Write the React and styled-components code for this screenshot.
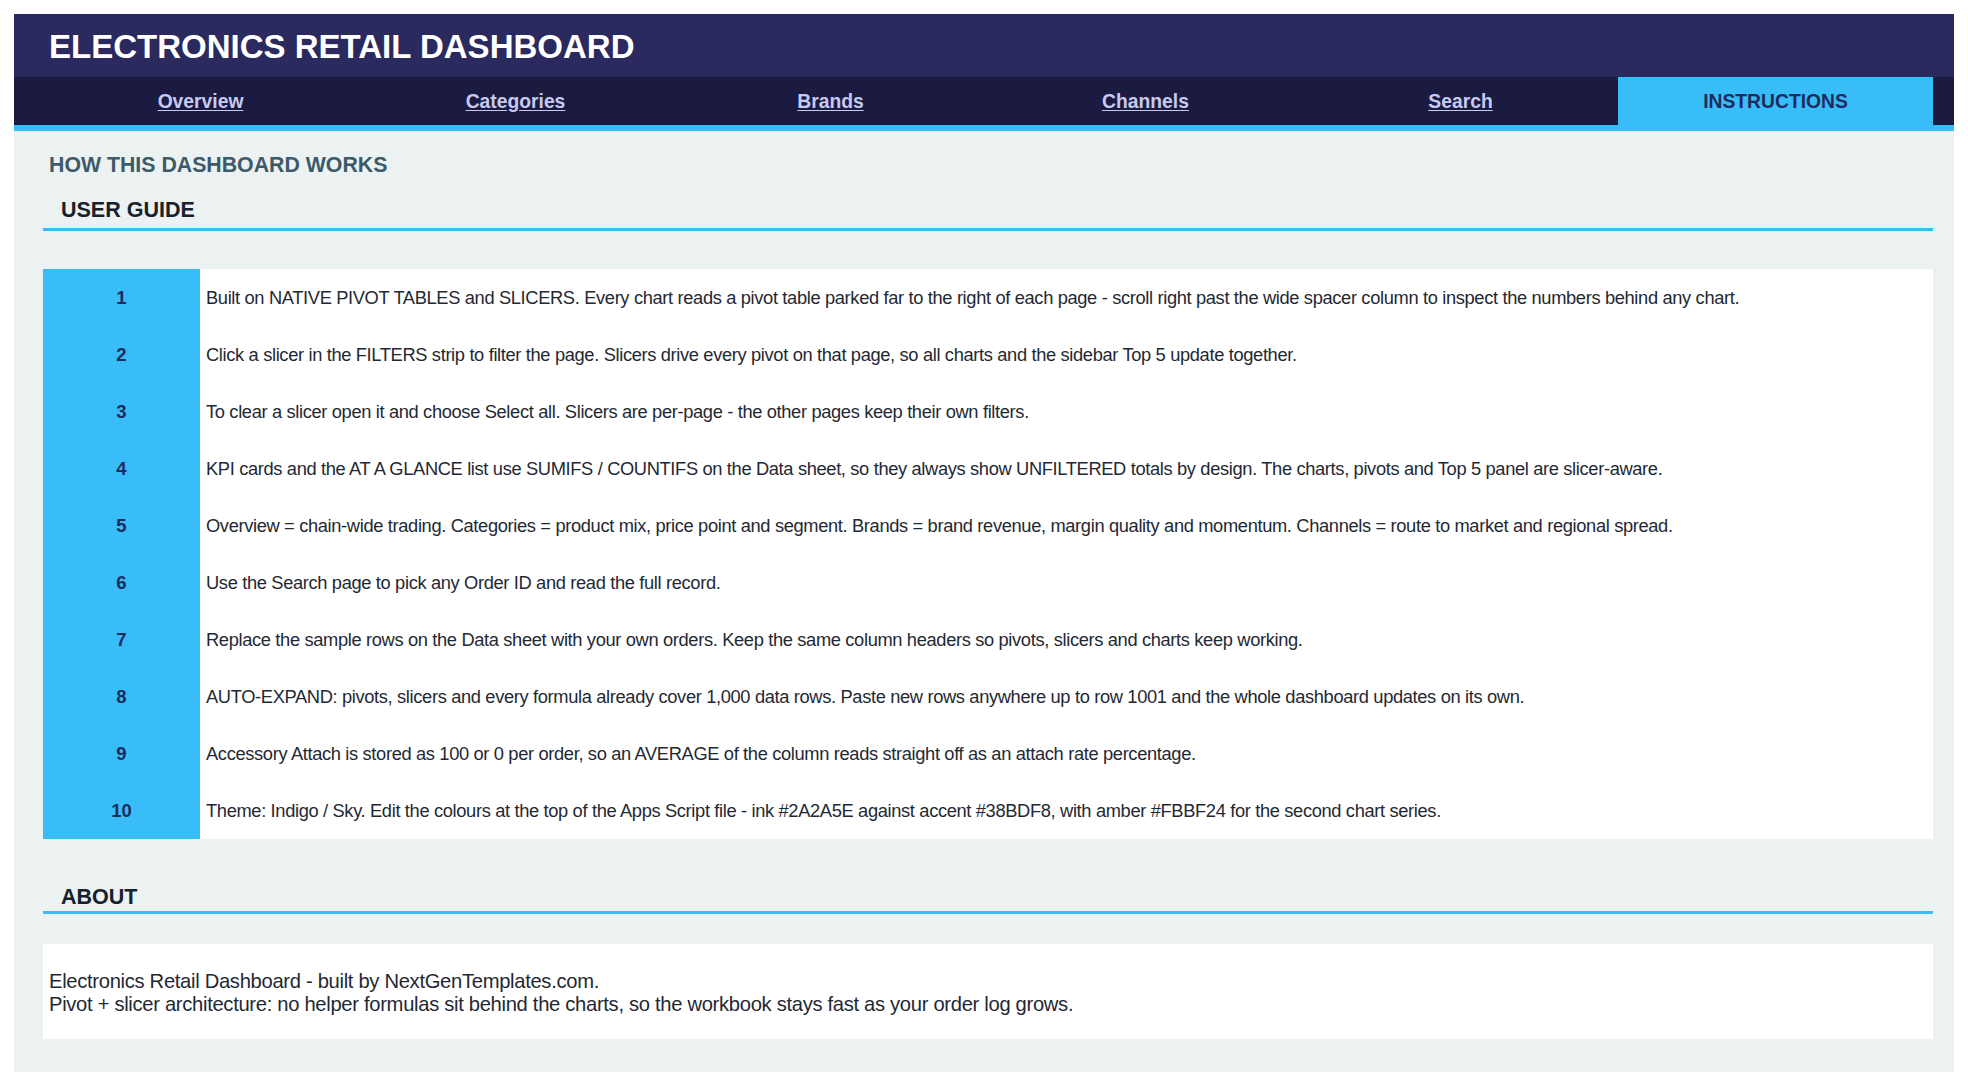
import React from 'react';
import styled, {createGlobalStyle} from 'styled-components';

// Palette
const ink = '#2B2A5E';
const inkDeep = '#1B1A40';
const sky = '#38BDF8';
const navy = '#1E2B5E';

const tabs = ['Overview', 'Categories', 'Brands', 'Channels', 'Search', 'INSTRUCTIONS'];

const steps = [
    'Built on NATIVE PIVOT TABLES and SLICERS. Every chart reads a pivot table parked far to the right of each page - scroll right past the wide spacer column to inspect the numbers behind any chart.',
    'Click a slicer in the FILTERS strip to filter the page. Slicers drive every pivot on that page, so all charts and the sidebar Top 5 update together.',
    'To clear a slicer open it and choose Select all. Slicers are per-page - the other pages keep their own filters.',
    'KPI cards and the AT A GLANCE list use SUMIFS / COUNTIFS on the Data sheet, so they always show UNFILTERED totals by design. The charts, pivots and Top 5 panel are slicer-aware.',
    'Overview = chain-wide trading. Categories = product mix, price point and segment. Brands = brand revenue, margin quality and momentum. Channels = route to market and regional spread.',
    'Use the Search page to pick any Order ID and read the full record.',
    'Replace the sample rows on the Data sheet with your own orders. Keep the same column headers so pivots, slicers and charts keep working.',
    'AUTO-EXPAND: pivots, slicers and every formula already cover 1,000 data rows. Paste new rows anywhere up to row 1001 and the whole dashboard updates on its own.',
    'Accessory Attach is stored as 100 or 0 per order, so an AVERAGE of the column reads straight off as an attach rate percentage.',
    'Theme: Indigo / Sky. Edit the colours at the top of the Apps Script file - ink #2A2A5E against accent #38BDF8, with amber #FBBF24 for the second chart series.',
];

const GlobalStyle = createGlobalStyle`
  body {
    margin: 14px;
    background: #ffffff;
    font-family: "Liberation Sans", Arial, sans-serif;
  }
`;

export default function App() {
    return (
        <>
            <GlobalStyle/>
            <Frame>
                <Header>
                    <Title>ELECTRONICS RETAIL DASHBOARD</Title>
                </Header>
                <Nav>
                    {tabs.map(t => (
                        <NavTab key={t} $active={t === 'INSTRUCTIONS'}>
                            <span>{t}</span>
                        </NavTab>
                    ))}
                </Nav>
                <Content>
                    <Kicker>HOW THIS DASHBOARD WORKS</Kicker>
                    <SectionHeading>USER GUIDE</SectionHeading>
                    <Guide>
                        {steps.map((s, i) => (
                            <GuideRow key={i}>
                                <StepNum>{i + 1}</StepNum>
                                <StepText>{s}</StepText>
                            </GuideRow>
                        ))}
                    </Guide>
                    <SectionHeading $about>ABOUT</SectionHeading>
                    <AboutBox>
                        <div>Electronics Retail Dashboard - built by NextGenTemplates.com.</div>
                        <div>Pivot + slicer architecture: no helper formulas sit behind the charts, so the workbook stays fast as your order log grows.</div>
                    </AboutBox>
                </Content>
            </Frame>
        </>
    );
}

const Frame = styled.div`
  width: 1940px;
  background: #ECF1F2;
`;

const Header = styled.header`
  height: 63px;
  background: ${ink};
  display: flex;
  align-items: center;
  padding: 1px 0 0 35px;
  box-sizing: border-box;
`;

const Title = styled.h1`
  margin: 0;
  color: #ffffff;
  font-size: 33px;
  font-weight: 700;
  line-height: 1;
`;

const Nav = styled.nav`
  display: flex;
  height: 48px;
  padding: 0 21px 0 29px;
  background: ${inkDeep};
  border-bottom: 6px solid ${sky};
`;

const NavTab = styled.div`
  flex: 1;
  display: flex;
  align-items: center;
  justify-content: center;
  padding-top: 2px;
  font-size: 19.3px;
  font-weight: 700;
  background: ${p => (p.$active ? sky : 'transparent')};
  color: ${p => (p.$active ? navy : '#C7CAF0')};
  text-decoration: ${p => (p.$active ? 'none' : 'underline')};
  text-underline-offset: 2px;
`;

const Content = styled.main`
  padding: 22px 21px 33px 29px;
`;

const Kicker = styled.div`
  padding-left: 6px;
  font-size: 21.3px;
  line-height: 24px;
  font-weight: 700;
  color: #3D5A68;
`;

const SectionHeading = styled.h2`
  margin: ${p => (p.$about ? '44px' : '20px')} 0 0;
  padding: ${p => (p.$about ? '2px 0 2px' : '1px 0 6px')} 18px;
  font-size: 21.5px;
  line-height: 24px;
  font-weight: 700;
  color: #17212B;
  border-bottom: 3px solid ${sky};
`;

const Guide = styled.div`
  margin-top: 38px;
  background: #ffffff;
`;

const GuideRow = styled.div`
  display: grid;
  grid-template-columns: 157px 1fr;
  height: 57px;
`;

const StepNum = styled.div`
  display: flex;
  align-items: center;
  justify-content: center;
  padding-top: 1px;
  background: ${sky};
  color: ${navy};
  font-size: 18.5px;
  font-weight: 700;
`;

const StepText = styled.div`
  display: flex;
  align-items: center;
  padding: 1px 0 0 6px;
  font-size: 18.3px;
  letter-spacing: -0.35px;
  color: #1F2933;
`;

const AboutBox = styled.div`
  margin-top: 30px;
  height: 95px;
  padding: 2px 6px 0;
  box-sizing: border-box;
  background: #ffffff;
  display: flex;
  flex-direction: column;
  justify-content: center;
  font-size: 20.2px;
  letter-spacing: -0.31px;
  line-height: 23px;
  color: #1F2933;
`;
